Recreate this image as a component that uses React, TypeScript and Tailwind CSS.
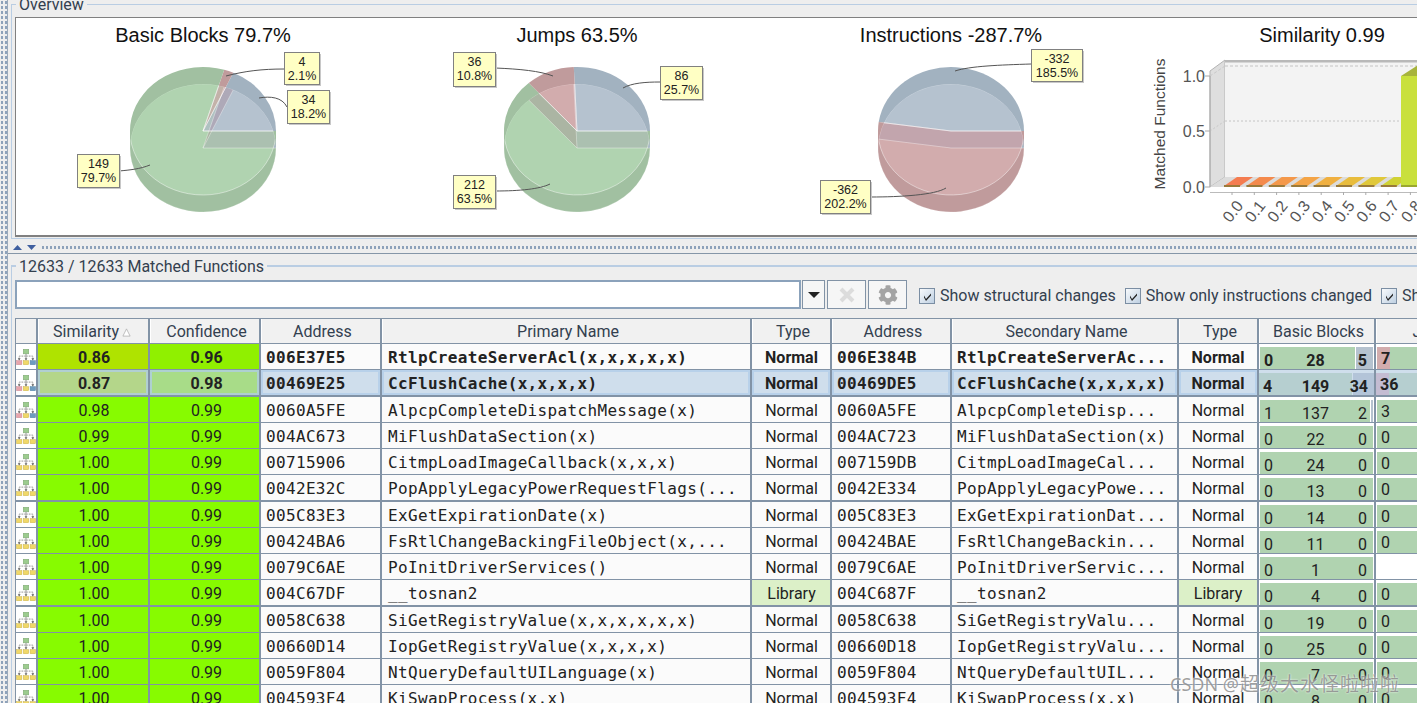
import { useId } from 'react';
import { FaCog } from 'react-icons/fa';

const GREEN = { dark: '#a1c0a1', light: '#b0d3b0', over: '#a1c0a1' };
const BLUE = { dark: '#a2b2c0', light: '#b5c2cf', over: '#9f95b0' };
const RED = { dark: '#c09b9c', light: '#d2acad', over: '#9f7285' };

interface Wedge {
  from: number;
  to: number;
  color: { dark: string; light: string; over: string };
}

interface Callout {
  x: number;
  y: number;
  w: number;
  h: number;
  lines: [string, string];
  path: string;
}

function wedgePath(cx: number, cy: number, from: number, to: number) {
  const rx = 73;
  const ry = 64;
  const rad = Math.PI / 180;
  const x0 = cx + rx * Math.cos(from * rad);
  const y0 = cy - ry * Math.sin(from * rad);
  const x1 = cx + rx * Math.cos(to * rad);
  const y1 = cy - ry * Math.sin(to * rad);
  const large = to - from > 180 ? 1 : 0;
  return `M${cx} ${cy}L${x0} ${y0}A${rx} ${ry} 0 ${large} 0 ${x1} ${y1}Z`;
}

function PieChart({ offset, title, cx, wedges, callouts }: { offset: number; title: string; cx: number; wedges: Wedge[]; callouts: Callout[] }) {
  const id = useId().replace(/[^a-z0-9]/gi, '');
  const top = 131;
  const bottom = 148;
  const under = wedges.find((w) => w.from <= 270 && w.to >= 270) ?? wedges[0];

  return (
    <svg viewBox={`${offset} 18 374 218`} className="h-[218px] w-[374px] shrink-0">
      <text x={cx} y={42} textAnchor="middle" fontSize="20" fill="#111" fontFamily="Liberation Sans, sans-serif">
        {title}
      </text>
      <rect x={cx - 73} y={top} width={146} height={bottom - top} fill={under.color.dark} />
      {wedges.map((w, i) => (
        <path key={`b${i}`} d={wedgePath(cx, bottom, w.from, w.to)} fill={w.color.dark} />
      ))}
      {wedges.map((w, i) => (
        <path key={`t${i}`} d={wedgePath(cx, top, w.from, w.to)} fill={w.color.dark} />
      ))}
      <defs>
        <clipPath id={`${id}lens`}>
          <ellipse cx={cx} cy={bottom} rx={73} ry={64} />
        </clipPath>
        {wedges.map((w, i) => (
          <clipPath key={i} id={`${id}top${i}`}>
            <path d={wedgePath(cx, top, w.from, w.to)} />
          </clipPath>
        ))}
      </defs>
      <g clipPath={`url(#${id}lens)`}>
        {wedges.map((w, i) => (
          <path key={i} d={wedgePath(cx, top, w.from, w.to)} fill={w.color.light} />
        ))}
        {wedges.map((w, i) =>
          wedges.map((other, j) =>
            i === j ? null : (
              <g key={`${i}-${j}`} clipPath={`url(#${id}top${j})`}>
                <path d={wedgePath(cx, bottom, w.from, w.to)} fill={w.color.over} opacity="0.3" />
              </g>
            ),
          ),
        )}
        {wedges.map((w, i) => (
          <path key={i} d={wedgePath(cx, top, w.from, w.to)} fill="none" stroke="#fff" strokeOpacity="0.45" strokeWidth="1" />
        ))}
        {wedges.map((w, i) => (
          <path key={i} d={wedgePath(cx, bottom, w.from, w.to)} fill="none" stroke="#fff" strokeOpacity="0.25" strokeWidth="0.8" />
        ))}
      </g>
      {callouts.map((c) => (
        <g key={c.lines[1]}>
          <path d={c.path} fill="none" stroke="#555" strokeWidth="1" />
          <rect x={c.x + 2} y={c.y + 2} width={c.w} height={c.h} fill="#c8c8c8" />
          <rect x={c.x + 0.5} y={c.y + 0.5} width={c.w} height={c.h} fill="#ffffc4" stroke="#808080" />
          <text x={c.x + c.w / 2 + 0.5} y={c.y + 14} textAnchor="middle" fontSize="12.5" fill="#222" fontFamily="Liberation Sans, sans-serif">
            {c.lines[0]}
          </text>
          <text x={c.x + c.w / 2 + 0.5} y={c.y + 28} textAnchor="middle" fontSize="12.5" fill="#222" fontFamily="Liberation Sans, sans-serif">
            {c.lines[1]}
          </text>
        </g>
      ))}
    </svg>
  );
}

const barColors = ['#f47c50', '#f48a4c', '#f4984a', '#f4a446', '#f0b040', '#e8bc3c', '#e0c83a', '#d0d234'];
const ticks = ['0.0', '0.1', '0.2', '0.3', '0.4', '0.5', '0.6', '0.7', '0.8'];

function BarChart() {
  return (
    <svg viewBox="1138 18 374 218" className="h-[218px] w-[374px] shrink-0" fontFamily="Liberation Sans, sans-serif">
      <text x={1322} y={42} textAnchor="middle" fontSize="20" fill="#111">
        Similarity 0.99
      </text>
      <text transform="translate(1165 124) rotate(-90)" textAnchor="middle" fontSize="15.5" fill="#444">
        Matched Functions
      </text>
      {[['1.0', 82], ['0.5', 137], ['0.0', 193]].map(([t, y]) => (
        <text key={t} x={1205} y={y} textAnchor="end" fontSize="16" fill="#555">
          {t}
        </text>
      ))}
      <polygon points="1210,71 1225,60 1225,177 1210,187" fill="#dedede" stroke="#b4b4b4" />
      <rect x={1225} y={62} width={200} height={115} fill="#f3f3f3" />
      <rect x={1225} y={60} width={200} height={2.5} fill="#b8b8b8" />
      <polygon points="1210,187 1225,177 1425,177 1425,187" fill="#dcdcdc" />
      <line x1={1225} y1={66} x2={1425} y2={66} stroke="#c4c4c4" strokeDasharray="3 2" />
      <line x1={1225} y1={121} x2={1425} y2={121} stroke="#c4c4c4" strokeDasharray="2 2" />
      <line x1={1210} y1={76} x2={1225} y2={66} stroke="#c8c8c8" strokeDasharray="3 2" />
      <line x1={1210} y1={131} x2={1225} y2={121} stroke="#c8c8c8" strokeDasharray="2 2" />
      <path d="M1205 76H1210V187" fill="none" stroke="#aaa" />
      <path d="M1205 131H1210M1205 187H1210" fill="none" stroke="#aaa" />
      {barColors.map((c, i) => {
        const x = 1224 + i * 22.4;
        return (
          <g key={c}>
            <polygon points={`${x},186 ${x + 16},186 ${x + 29},177 ${x + 13},177`} fill={c} />
            <rect x={x} y={185} width={16} height={2} fill="#9a7a3a" />
          </g>
        );
      })}
      <polygon points="1401,76 1418,65 1430,65 1420,76" fill="#a7b43c" />
      <rect x={1401} y={76} width={24} height={111} fill="#c9e03c" />
      <rect x={1401} y={185} width={24} height={2} fill="#9aa830" />
      <line x1={1210} y1={192.5} x2={1425} y2={192.5} stroke="#bbb" />
      {ticks.map((t, i) => {
        const x = 1232 + i * 22.3;
        return (
          <g key={t}>
            <line x1={x} y1={192} x2={x} y2={195} stroke="#aaa" />
            <text transform={`translate(${x + 12} 206) rotate(-52)`} textAnchor="end" fontSize="16" fill="#555">
              {t}
            </text>
          </g>
        );
      })}
    </svg>
  );
}

function Check({ label }: { label: string }) {
  return (
    <div className="flex shrink-0 items-center gap-[5px] whitespace-nowrap text-[16px] text-[#33404f]">
      <span className="flex h-[16px] w-[16px] items-center justify-center border border-[#7b8ea3] bg-gradient-to-br from-[#f8fafc] to-[#bfd0e2]">
        <svg viewBox="0 0 12 12" className="h-[12px] w-[12px]">
          <path d="M3 5.5L5 9L10 3.5V5.5L5 11L3 7.5Z" fill="#222" />
        </svg>
      </span>
      {label}
    </div>
  );
}

function FlowIcon({ colored }: { colored: boolean }) {
  return (
    <svg viewBox="0 0 22 18" className="h-[18px] w-[22px]">
      <rect x="8" y="0.5" width="6" height="5" fill="#9ccc8e" stroke="#7da873" strokeWidth="0.6" />
      <path d="M11 5.5V11M11 8H3.5V11M11 8H18.5V11" fill="none" stroke="#8c8c8c" strokeWidth="1" strokeDasharray="2 1" />
      <path d="M2 10.5H5L3.5 13ZM9.5 10.5H12.5L11 13ZM17 10.5H20L18.5 13Z" fill="#666" />
      <rect x="0.5" y="13" width="6" height="4.5" fill={colored ? '#e8a4ac' : '#f0d868'} stroke={colored ? '#c88890' : '#c8b048'} strokeWidth="0.5" />
      <rect x="8" y="13" width="6" height="4.5" fill="#f0d868" stroke="#c8b048" strokeWidth="0.5" />
      <rect x="15.5" y="13" width="6" height="4.5" fill={colored ? '#6e9cc0' : '#f0d868'} stroke={colored ? '#4f7ea0' : '#c8b048'} strokeWidth="0.5" />
    </svg>
  );
}

interface Row {
  sim: string;
  conf: string;
  simBg: string;
  confBg: string;
  addr1: string;
  name1: string;
  addr2: string;
  name2: string;
  type: string;
  bb: [number, number, number];
  jump: string;
  jumpLead?: string;
  bold?: boolean;
  selected?: boolean;
  thick?: boolean;
  colored?: boolean;
}

const LIME = 'bg-[#87fb00]';

const base = { simBg: LIME, confBg: LIME, type: 'Normal', conf: '0.99', sim: '1.00', jump: '0' };

const rows: Row[] = [
  { ...base, sim: '0.86', conf: '0.96', simBg: 'bg-[#afe300]', confBg: 'bg-[#90f000]', addr1: '006E37E5', name1: 'RtlpCreateServerAcl(x,x,x,x,x)', addr2: '006E384B', name2: 'RtlpCreateServerAc...', bb: [0, 28, 5], jump: '7', jumpLead: 'w-[13px] bg-[#d2acad]', bold: true, colored: true },
  { ...base, sim: '0.87', conf: '0.98', simBg: 'bg-[#b4d68a]', confBg: 'bg-[#a8dc88]', addr1: '00469E25', name1: 'CcFlushCache(x,x,x,x)', addr2: '00469DE5', name2: 'CcFlushCache(x,x,x,x)', bb: [4, 149, 34], jump: '36', jumpLead: 'w-[13px] bg-[#c4bcd2]', bold: true, selected: true, thick: true, colored: true },
  { ...base, sim: '0.98', addr1: '0060A5FE', name1: 'AlpcpCompleteDispatchMessage(x)', addr2: '0060A5FE', name2: 'AlpcpCompleteDisp...', bb: [1, 137, 2], jump: '3', colored: true },
  { ...base, sim: '0.99', addr1: '004AC673', name1: 'MiFlushDataSection(x)', addr2: '004AC723', name2: 'MiFlushDataSection(x)', bb: [0, 22, 0] },
  { ...base, addr1: '00715906', name1: 'CitmpLoadImageCallback(x,x,x)', addr2: '007159DB', name2: 'CitmpLoadImageCal...', bb: [0, 24, 0] },
  { ...base, addr1: '0042E32C', name1: 'PopApplyLegacyPowerRequestFlags(...', addr2: '0042E334', name2: 'PopApplyLegacyPowe...', bb: [0, 13, 0], thick: true },
  { ...base, addr1: '005C83E3', name1: 'ExGetExpirationDate(x)', addr2: '005C83E3', name2: 'ExGetExpirationDat...', bb: [0, 14, 0] },
  { ...base, addr1: '00424BA6', name1: 'FsRtlChangeBackingFileObject(x,...', addr2: '00424BAE', name2: 'FsRtlChangeBackin...', bb: [0, 11, 0] },
  { ...base, addr1: '0079C6AE', name1: 'PoInitDriverServices()', addr2: '0079C6AE', name2: 'PoInitDriverServic...', bb: [0, 1, 0], jump: '' },
  { ...base, type: 'Library', addr1: '004C67DF', name1: '__tosnan2', addr2: '004C687F', name2: '__tosnan2', bb: [0, 4, 0], thick: true },
  { ...base, addr1: '0058C638', name1: 'SiGetRegistryValue(x,x,x,x,x,x)', addr2: '0058C638', name2: 'SiGetRegistryValu...', bb: [0, 19, 0] },
  { ...base, addr1: '00660D14', name1: 'IopGetRegistryValue(x,x,x,x)', addr2: '00660D18', name2: 'IopGetRegistryValu...', bb: [0, 25, 0] },
  { ...base, addr1: '0059F804', name1: 'NtQueryDefaultUILanguage(x)', addr2: '0059F804', name2: 'NtQueryDefaultUIL...', bb: [0, 7, 0] },
  { ...base, addr1: '004593F4', name1: 'KiSwapProcess(x,x)', addr2: '004593F4', name2: 'KiSwapProcess(x,x)', bb: [0, 8, 0] },
];

const GRID = 'grid grid-cols-[22px_112px_111px_121px_370px_80px_120px_227px_80px_117px_120px]';
const CELL = 'flex min-w-0 items-center overflow-hidden whitespace-nowrap border-r-2 border-[#8293a6]';
const MONO = "[font-family:'DejaVu_Sans_Mono',monospace] text-[16px] tracking-[0.34px]";
const SEL = 'shadow-[inset_0_0_0_2px_rgba(176,204,234,0.75)]';

function Header() {
  const titles = ['Similarity', 'Confidence', 'Address', 'Primary Name', 'Type', 'Address', 'Secondary Name', 'Type', 'Basic Blocks', 'Jumps'];
  return (
    <div className={`${GRID} h-[26px] border-y border-[#8293a6] text-[16px] text-[#33404f]`}>
      <div className={`${CELL} bg-[#f1f1f1]`} />
      {titles.map((t, i) => (
        <div key={i} className={`${CELL} justify-center gap-[3px] border-l border-l-white bg-[#f1f1f1] pt-[2px] ${i === 0 ? 'pr-[3px]' : 'pl-[3px]'}`}>
          {t}
          {i === 0 && (
            <svg viewBox="0 0 10 10" className="h-[9px] w-[9px]">
              <path d="M5 1L9 9H1Z" fill="#fff" stroke="#aaa" strokeWidth="0.8" />
            </svg>
          )}
        </div>
      ))}
    </div>
  );
}

function TableRow({ row }: { row: Row }) {
  const weight = row.bold ? 'font-bold' : 'font-normal';
  const plain = row.selected ? `bg-[#cfdeec] ${SEL}` : 'bg-[#fbfbfb]';
  const height = row.thick ? 'h-[27px] border-b-2' : 'h-[26px] border-b';
  const typeBg = row.type === 'Library' ? 'bg-[#dcf0c8]' : plain;
  const green = row.selected ? 'bg-[#b6cfd0]' : 'bg-[#b0d3b0]';
  const blue = row.selected ? 'bg-[#b3c4d8]' : 'bg-[#b5c2cf]';
  const [a, b, c] = row.bb;

  return (
    <div className={`${GRID} ${height} border-[#8293a6] text-[16px] text-[#222] ${weight}`}>
      <div className={`${CELL} justify-center bg-white`}>
        <FlowIcon colored={!!row.colored} />
      </div>
      <div className={`${CELL} justify-center pl-[2px] pt-[3px] ${row.simBg} ${row.selected ? SEL : ''}`}>{row.sim}</div>
      <div className={`${CELL} justify-center pl-[4px] pt-[3px] ${row.confBg} ${row.selected ? SEL : ''}`}>{row.conf}</div>
      <div className={`${CELL} pl-[5px] pt-[3px] ${plain} ${MONO}`}>{row.addr1}</div>
      <div className={`${CELL} pl-[6px] pt-[3px] ${plain} ${MONO}`}>{row.name1}</div>
      <div className={`${CELL} justify-center pl-px pt-[3px] ${typeBg}`}>{row.type}</div>
      <div className={`${CELL} pl-[5px] pt-[3px] ${plain} ${MONO}`}>{row.addr2}</div>
      <div className={`${CELL} pl-[5px] pt-[3px] ${plain} ${MONO}`}>{row.name2}</div>
      <div className={`${CELL} justify-center pt-[3px] ${typeBg}`}>{row.type}</div>
      <div className={`${CELL} items-stretch pt-[3px] ${row.selected ? 'bg-[#cfdeec]' : 'bg-white'}`}>
        <div className={`relative w-full ${row.selected ? '' : 'ml-px mr-px'}`}>
          <div className="absolute inset-0 flex gap-px">
            <div className={green} style={{ flexGrow: a + b, flexBasis: 0 }} />
            {c > 0 && <div className={blue} style={{ flexGrow: c, flexBasis: 0 }} />}
          </div>
          <div className="relative grid h-full grid-cols-[1fr_auto_1fr] items-center pl-[4px] pr-[6px] pt-[2px]">
            <span>{a}</span>
            <span>{b}</span>
            <span className="text-right">{c}</span>
          </div>
        </div>
      </div>
      <div className={`${CELL} items-stretch border-r-0 pt-[3px] ${row.selected ? 'bg-[#cfdeec]' : 'bg-white'}`}>
        {row.jump !== '' && (
          <div className={`relative flex w-full ${row.selected ? '' : 'ml-px'}`}>
            {row.jumpLead && <div className={row.jumpLead} />}
            <div className={`flex-1 ${green}`} />
            <span className="absolute inset-y-0 left-[4px] flex items-center pt-[2px]">{row.jump}</span>
          </div>
        )}
      </div>
    </div>
  );
}

export default function App() {
  const g = { from: 73.1, to: 360, color: GREEN };
  return (
    <div className="relative flex h-[703px] w-[1417px] overflow-hidden bg-[#eeeeee] [font-family:Roboto,sans-serif]">
      <div className="w-[7px] shrink-0 bg-[radial-gradient(#8ea2ba_1px,transparent_1.2px)] bg-[length:4px_5px]" />
      <div className="w-px shrink-0 bg-[#9aa9ba]" />
      <div className="flex min-w-0 flex-1 flex-col">
        <section className="relative ml-[3px] mt-[4px] h-[235px] shrink-0 border-y border-l border-[#b9cde3] pl-[3px] pt-[12px]">
          <span className="absolute -top-[12px] left-[4px] bg-[#eeeeee] px-[3px] text-[16px] text-[#33404f]">Overview</span>
          <div className="flex h-[220px] w-[1500px] overflow-hidden border-b-2 border-l border-t border-[#808080] bg-white">
            <PieChart
              offset={16}
              title="Basic Blocks 79.7%"
              cx={203}
              wedges={[{ from: 0, to: 65.5, color: BLUE }, { from: 65.5, to: 73.1, color: RED }, g]}
              callouts={[
                { x: 284, y: 52, w: 35, h: 32, lines: ['4', '2.1%'], path: 'M284 69C262 69 245 71 226 76' },
                { x: 287, y: 90, w: 42, h: 33, lines: ['34', '18.2%'], path: 'M287 107C282 97 270 96 259 98' },
                { x: 77, y: 154, w: 42, h: 33, lines: ['149', '79.7%'], path: 'M119 171C130 170 140 169 150 165' },
              ]}
            />
            <PieChart
              offset={390}
              title="Jumps 63.5%"
              cx={577}
              wedges={[{ from: 0, to: 92.5, color: BLUE }, { from: 92.5, to: 131.4, color: RED }, { from: 131.4, to: 360, color: GREEN }]}
              callouts={[
                { x: 453, y: 52, w: 42, h: 34, lines: ['36', '10.8%'], path: 'M495 68C520 69 540 71 553 76' },
                { x: 660, y: 66, w: 42, h: 33, lines: ['86', '25.7%'], path: 'M660 82C645 82 632 83 623 88' },
                { x: 453, y: 175, w: 42, h: 33, lines: ['212', '63.5%'], path: 'M495 191C520 191 540 189 550 184' },
              ]}
            />
            <PieChart
              offset={764}
              title="Instructions -287.7%"
              cx={951}
              wedges={[{ from: 0, to: 172, color: BLUE }, { from: 172, to: 360, color: RED }]}
              callouts={[
                { x: 1031, y: 49, w: 51, h: 32, lines: ['-332', '185.5%'], path: 'M1031 64C1000 65 970 66 955 71' },
                { x: 820, y: 180, w: 50, h: 33, lines: ['-362', '202.2%'], path: 'M871 197C900 197 935 195 946 188' },
              ]}
            />
            <BarChart />
          </div>
        </section>
        <div className="flex h-[15px] shrink-0 items-center gap-[5px] border-b border-[#8596a8] pl-[5px] pt-[3px]">
          <svg viewBox="0 0 9 5" className="h-[5px] w-[9px] shrink-0">
            <path d="M4.5 0L9 5H0Z" fill="#3f5f9f" />
          </svg>
          <svg viewBox="0 0 9 5" className="h-[5px] w-[9px] shrink-0">
            <path d="M0 0H9L4.5 5Z" fill="#3f5f9f" />
          </svg>
          <div className="h-[5px] flex-1 bg-[radial-gradient(#8ea2ba_1px,transparent_1.2px)] bg-[length:4px_5px]" />
        </div>
        <section className="relative ml-[3px] mt-[11px] min-h-0 flex-1 border-l border-t-2 border-[#b9cde3] pl-[3px] pt-[13px]">
          <span className="absolute -top-[12px] left-[4px] bg-[#eeeeee] px-[3px] text-[16px] text-[#33404f]">12633 / 12633 Matched Functions</span>
          <div className="flex h-[29px] items-stretch">
            <div className="w-[786px] shrink-0 border-2 border-[#8ba2bb] bg-white" />
            <button className="ml-px flex w-[23px] shrink-0 items-center justify-center border border-[#8293a6] bg-[#f6f6f6]">
              <span className="h-0 w-0 border-x-[6px] border-t-[6px] border-x-transparent border-t-[#222]" />
            </button>
            <button className="ml-[2px] flex w-[39px] shrink-0 items-center justify-center border border-[#8293a6] bg-[#f6f6f6]">
              <svg viewBox="0 0 16 16" className="h-[16px] w-[16px]">
                <path d="M2 2L14 14M14 2L2 14" stroke="#dcdcdc" strokeWidth="4" />
              </svg>
            </button>
            <button className="ml-[2px] flex w-[39px] shrink-0 items-center justify-center border border-[#8293a6] bg-[#f6f6f6]">
              <FaCog className="h-[20px] w-[20px] text-[#a4a4a4]" />
            </button>
            <div className="ml-[12px] flex items-center gap-[9px] pt-[3px]">
              <Check label="Show structural changes" />
              <Check label="Show only instructions changed" />
              <Check label="Show basic blocks changed" />
            </div>
          </div>
          <div className="mt-[9px] w-[1500px] border-l border-[#8293a6]">
            <Header />
            {rows.map((r) => (
              <TableRow key={r.addr1} row={r} />
            ))}
          </div>
        </section>
      </div>
      <span className="absolute left-[1170px] top-[670px] flex items-baseline whitespace-nowrap text-[#7f7f7f]/75 [font-family:'Noto_Sans','Noto_Sans_CJK_SC',sans-serif] [text-shadow:0_0_2px_#fff]">
        <span className="text-[18px]">CSDN @</span>
        <span className="ml-[1px] text-[19px] tracking-[1px]">超级大水怪啦啦啦</span>
      </span>
    </div>
  );
}
